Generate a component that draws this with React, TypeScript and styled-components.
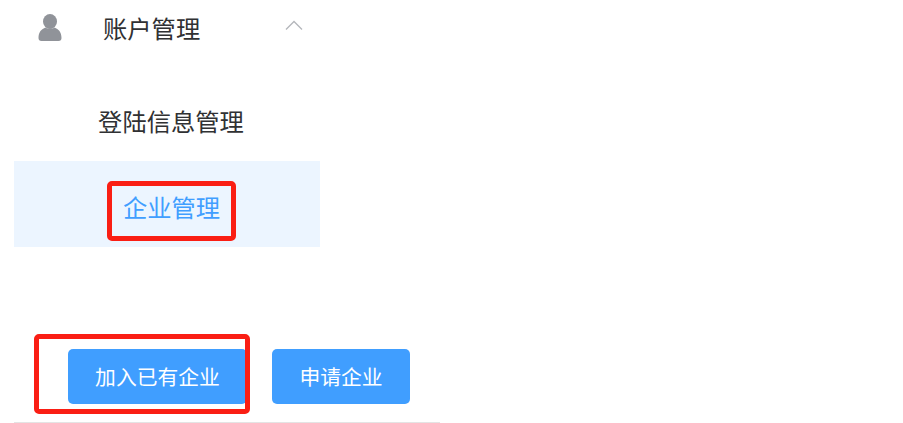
import React from 'react';
import styled, { createGlobalStyle } from 'styled-components';

const GlobalStyle = createGlobalStyle`
  html, body {
    margin: 0;
    padding: 0;
    background: #fff;
    overflow: hidden;
    font-family: "Noto Sans CJK SC", "Liberation Sans", sans-serif;
  }
`;

const Page = styled.div`
  position: relative;
  width: 903px;
  height: 423px;
  padding-left: 14px;
  box-sizing: border-box;
`;

const Sidebar = styled.nav`
  width: 306px;
  display: flex;
  flex-direction: column;
`;

const MenuHeader = styled.div`
  height: 58px;
  display: flex;
  align-items: center;
  padding-left: 24px;
  color: #303133;
  font-size: 24.3px;
`;

const UserIcon = styled.svg`
  width: 24px;
  height: 28px;
  flex: none;
  margin-top: -2px;
`;

const MenuTitle = styled.span`
  margin-left: 41px;
  margin-top: -2px;
  width: 182px;
  line-height: 32px;
`;

const Chevron = styled.svg`
  width: 18px;
  height: 10px;
  flex: none;
  margin-top: -9px;
`;

const MenuItem = styled.div<{ $active?: boolean }>`
  height: ${props => (props.$active ? 86 : 82)}px;
  margin-top: ${props => (props.$active ? 0 : 21)}px;
  padding: ${props => (props.$active ? '5px 0 0 9px' : '0 0 0 8px')};
  box-sizing: border-box;
  display: flex;
  align-items: center;
  justify-content: center;
  font-size: 24.3px;
  color: ${props => (props.$active ? '#409eff' : '#303133')};
  background: ${props => (props.$active ? '#ecf5ff' : 'transparent')};
`;

const Footer = styled.div`
  position: absolute;
  left: 14px;
  top: 349px;
  width: 426px;
  height: 74px;
  box-sizing: border-box;
  padding-left: 54px;
  border-bottom: 1px solid #e4e4e4;
  display: flex;
  align-items: flex-start;
  gap: 25px;
`;

const Button = styled.button<{ $width: number }>`
  width: ${props => props.$width}px;
  height: 55px;
  padding: 0 0 2px;
  border: none;
  border-radius: 5px;
  background: #409eff;
  color: #fff;
  font-family: inherit;
  font-size: 20.8px;
`;

const Callout = styled.div<{ $left: number; $top: number; $width: number; $height: number }>`
  position: absolute;
  left: ${props => props.$left}px;
  top: ${props => props.$top}px;
  width: ${props => props.$width}px;
  height: ${props => props.$height}px;
  box-sizing: border-box;
  border: 5px solid #fa1e14;
  border-radius: 5px;
`;

export default function App() {
  return (
    <Page>
      <GlobalStyle />
      <Sidebar>
        <MenuHeader>
          <UserIcon viewBox="0 0 24 28">
            <ellipse cx="12" cy="7.500" rx="7" ry="7.500" fill="#909399" />
            <path
              d="M0.500 24c0-6 3-9 7-10.500 1.500 1.600 7.500 1.600 9 0 4 1.500 7 4.500 7 10.500 0 2-1 3-3 3H3.500c-2 0-3-1-3-3z"
              fill="#909399"
            />
          </UserIcon>
          <MenuTitle>账户管理</MenuTitle>
          <Chevron viewBox="0 0 18 10">
            <path d="M1 9.500 9 1.500l8 8" fill="none" stroke="#b4b6bb" strokeWidth="1.300" />
          </Chevron>
        </MenuHeader>
        <MenuItem>登陆信息管理</MenuItem>
        <MenuItem $active>企业管理</MenuItem>
      </Sidebar>
      <Footer>
        <Button $width={179}>加入已有企业</Button>
        <Button $width={138}>申请企业</Button>
      </Footer>
      <Callout $left={107} $top={181} $width={129} $height={60} />
      <Callout $left={34} $top={334} $width={216} $height={80} />
    </Page>
  );
}
